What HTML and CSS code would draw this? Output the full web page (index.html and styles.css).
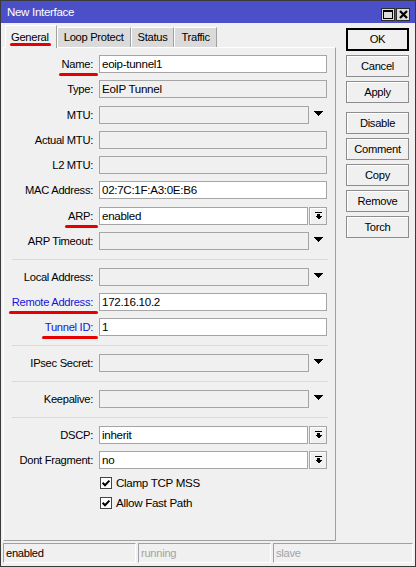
FILE: index.html
```html
<!DOCTYPE html>
<html>
<head>
<meta charset="utf-8">
<title>New Interface</title>
<link rel="stylesheet" href="styles.css">
</head>
<body>
<div class="window">
  <div class="titlebar">
    <span class="title">New Interface</span>
    <div class="tb-buttons">
      <span class="tb-btn"><svg width="10" height="9" viewBox="0 0 10 9" shape-rendering="crispEdges"><rect x="0.5" y="0.5" width="9" height="8" fill="none" stroke="#000"/><rect x="0" y="0" width="10" height="2" fill="#000"/></svg></span>
      <span class="tb-btn"><svg width="9" height="9" viewBox="0 0 9 9"><path d="M1 1 L8 8 M8 1 L1 8" stroke="#000" stroke-width="2.2"/></svg></span>
    </div>
  </div>
  <div class="body">
    <div class="main">
      <div class="left">
        <div class="tabs">
          <div class="tab active"><span class="tab-text">General</span></div>
          <div class="tab">Loop Protect</div>
          <div class="tab">Status</div>
          <div class="tab">Traffic</div>
        </div>
        <div class="panel">
          <div class="group first">
            <div class="row"><div class="lbl"><span class="marked">Name:</span></div><div class="field"><div class="input edit">eoip-tunnel1</div></div></div>
            <div class="row"><div class="lbl">Type:</div><div class="field"><div class="input">EoIP Tunnel</div></div></div>
            <div class="row"><div class="lbl">MTU:</div><div class="field"><div class="input"></div><div class="drop-arrow"><svg width="9" height="5" viewBox="0 0 9 5" shape-rendering="crispEdges"><polygon points="0,0 9,0 4.5,5" fill="#000"/></svg></div></div></div>
            <div class="row"><div class="lbl">Actual MTU:</div><div class="field"><div class="input"></div></div></div>
            <div class="row"><div class="lbl">L2 MTU:</div><div class="field"><div class="input"></div></div></div>
            <div class="row"><div class="lbl">MAC Address:</div><div class="field"><div class="input edit">02:7C:1F:A3:0E:B6</div></div></div>
            <div class="row"><div class="lbl"><span class="marked">ARP:</span></div><div class="field"><div class="input edit">enabled</div><div class="drop-btn"><svg width="7" height="8" viewBox="0 0 7 8" shape-rendering="crispEdges"><rect x="0" y="0" width="7" height="1" fill="#000"/><rect x="2" y="2" width="3" height="2" fill="#000"/><polygon points="0,4 7,4 3.5,7.5" fill="#000"/></svg></div></div></div>
            <div class="row"><div class="lbl">ARP Timeout:</div><div class="field"><div class="input"></div><div class="drop-arrow"><svg width="9" height="5" viewBox="0 0 9 5" shape-rendering="crispEdges"><polygon points="0,0 9,0 4.5,5" fill="#000"/></svg></div></div></div>
          </div>
          <div class="sep"></div>
          <div class="group">
            <div class="row"><div class="lbl">Local Address:</div><div class="field"><div class="input"></div><div class="drop-arrow"><svg width="9" height="5" viewBox="0 0 9 5" shape-rendering="crispEdges"><polygon points="0,0 9,0 4.5,5" fill="#000"/></svg></div></div></div>
            <div class="row"><div class="lbl blue"><span class="marked">Remote Address:</span></div><div class="field"><div class="input edit">172.16.10.2</div></div></div>
            <div class="row"><div class="lbl blue"><span class="marked">Tunnel ID:</span></div><div class="field"><div class="input edit">1</div></div></div>
          </div>
          <div class="sep"></div>
          <div class="group">
            <div class="row"><div class="lbl">IPsec Secret:</div><div class="field"><div class="input"></div><div class="drop-arrow"><svg width="9" height="5" viewBox="0 0 9 5" shape-rendering="crispEdges"><polygon points="0,0 9,0 4.5,5" fill="#000"/></svg></div></div></div>
          </div>
          <div class="sep"></div>
          <div class="group">
            <div class="row"><div class="lbl">Keepalive:</div><div class="field"><div class="input"></div><div class="drop-arrow"><svg width="9" height="5" viewBox="0 0 9 5" shape-rendering="crispEdges"><polygon points="0,0 9,0 4.5,5" fill="#000"/></svg></div></div></div>
          </div>
          <div class="sep"></div>
          <div class="group">
            <div class="row"><div class="lbl">DSCP:</div><div class="field"><div class="input edit">inherit</div><div class="drop-btn"><svg width="7" height="8" viewBox="0 0 7 8" shape-rendering="crispEdges"><rect x="0" y="0" width="7" height="1" fill="#000"/><rect x="2" y="2" width="3" height="2" fill="#000"/><polygon points="0,4 7,4 3.5,7.5" fill="#000"/></svg></div></div></div>
            <div class="row"><div class="lbl">Dont Fragment:</div><div class="field"><div class="input edit">no</div><div class="drop-btn"><svg width="7" height="8" viewBox="0 0 7 8" shape-rendering="crispEdges"><rect x="0" y="0" width="7" height="1" fill="#000"/><rect x="2" y="2" width="3" height="2" fill="#000"/><polygon points="0,4 7,4 3.5,7.5" fill="#000"/></svg></div></div></div>
            <div class="row check-row"><div></div><div class="check"><svg width="12" height="12" viewBox="0 0 12 12"><rect x="0.5" y="0.5" width="11" height="11" fill="#fff" stroke="#444"/><path d="M2.6 5.8 L5 8.2 L9.4 3.6" fill="none" stroke="#000" stroke-width="2"/></svg><span>Clamp TCP MSS</span></div></div>
            <div class="row check-row"><div></div><div class="check"><svg width="12" height="12" viewBox="0 0 12 12"><rect x="0.5" y="0.5" width="11" height="11" fill="#fff" stroke="#444"/><path d="M2.6 5.8 L5 8.2 L9.4 3.6" fill="none" stroke="#000" stroke-width="2"/></svg><span>Allow Fast Path</span></div></div>
          </div>
        </div>
      </div>
      <div class="buttons">
        <div class="btn default">OK</div>
        <div class="btn">Cancel</div>
        <div class="btn">Apply</div>
        <div class="btn spaced">Disable</div>
        <div class="btn">Comment</div>
        <div class="btn">Copy</div>
        <div class="btn">Remove</div>
        <div class="btn">Torch</div>
      </div>
    </div>
    <div class="statusbar">
      <div class="status">enabled</div>
      <div class="status dim">running</div>
      <div class="status dim">slave</div>
    </div>
  </div>
</div>
</body>
</html>
```

FILE: styles.css
```css
html, body {
  margin: 0;
  padding: 0;
}
body {
  width: 416px;
  height: 567px;
  font-family: "Liberation Sans", Arial, sans-serif;
  font-size: 11.2px;
  letter-spacing: -0.3px;
  color: #000;
  background: #fff;
}
.window {
  box-sizing: border-box;
  width: 416px;
  height: 567px;
  border: 1px solid #3a3a3a;
  background: #f0f0f0;
  display: flex;
  flex-direction: column;
}
.titlebar {
  flex: none;
  height: 22px;
  background: #4b50c8;
  display: flex;
  align-items: center;
  justify-content: space-between;
  padding: 0 5px 0 6px;
}
.title {
  color: #fff;
  font-size: 11.5px;
}
.tb-buttons {
  display: flex;
  gap: 1px;
  margin-top: 4px;
}
.tb-btn {
  box-sizing: border-box;
  width: 14px;
  height: 13px;
  border: 1px solid #2e2e2e;
  background: #dcdcdc;
  display: flex;
  align-items: center;
  justify-content: center;
}
.body {
  flex: 1;
  display: flex;
  flex-direction: column;
  gap: 2px;
  padding: 2px 2px 3px 2px;
  min-height: 0;
}
.main {
  flex: 1;
  display: flex;
  gap: 10px;
  min-height: 0;
}
.left {
  width: 333px;
  display: flex;
  flex-direction: column;
}
.tabs {
  flex: none;
  height: 22px;
  display: flex;
  align-items: flex-end;
  padding-left: 2px;
  position: relative;
  z-index: 1;
}
.tab {
  box-sizing: border-box;
  height: 20px;
  padding: 0 6px;
  line-height: 19px;
  background: #dadada;
  border-top: 1px solid #fff;
  border-left: 1px solid #fff;
  border-right: 1px solid #a0a0a0;
  white-space: nowrap;
}
.tab.active {
  height: 23px;
  margin-bottom: -1px;
  padding: 0 7px 0 5px;
  background: #f0f0f0;
  line-height: 22px;
}
.tab-text {
  position: relative;
  display: inline-block;
}
.tab-text::after {
  content: "";
  position: absolute;
  left: -1px;
  right: -2px;
  bottom: 2px;
  height: 3px;
  border-radius: 2px;
  background: #e80000;
}
.panel {
  flex: 1;
  border: 1px solid;
  border-color: #fff #a0a0a0 #a0a0a0 #fff;
  padding-top: 7px;
  display: flex;
  flex-direction: column;
  gap: 7px;
}
.group {
  display: flex;
  flex-direction: column;
  gap: 7px;
}
.group.first {
  gap: 7.3px;
}
.row {
  display: grid;
  grid-template-columns: 89px 228px;
  column-gap: 6px;
  height: 18px;
  align-items: center;
}
.lbl {
  text-align: right;
  white-space: nowrap;
  line-height: 18px;
}
.lbl.blue {
  color: #1414dc;
}
.marked {
  position: relative;
  display: inline-block;
}
.marked::after {
  content: "";
  position: absolute;
  left: -3px;
  right: -5px;
  bottom: -3px;
  height: 3px;
  border-radius: 2px;
  background: #e80000;
}
.field {
  display: flex;
  height: 18px;
}
.input {
  flex: 1;
  box-sizing: border-box;
  border: 1px solid #a5a5a5;
  background: #f0f0f0;
  padding: 0 2px;
  line-height: 16px;
  font-size: 11.6px;
  white-space: nowrap;
  overflow: hidden;
}
.input.edit {
  background: #fff;
}
.drop-arrow {
  width: 18px;
  display: flex;
  align-items: center;
  justify-content: center;
  padding-bottom: 3px;
  box-sizing: border-box;
}
.drop-btn {
  box-sizing: border-box;
  width: 18px;
  margin-left: 1px;
  border: 1px solid #a5a5a5;
  box-shadow: inset 1px 1px #fff;
  background: #f0f0f0;
  display: flex;
  align-items: center;
  justify-content: center;
}
.sep {
  height: 1px;
  margin: 2px 7px 1px 8px;
  background: #dadada;
}
.row.check-row {
  height: 13px;
}
.check {
  display: flex;
  align-items: center;
  gap: 4px;
  padding-left: 1px;
  white-space: nowrap;
  font-size: 11.6px;
}
.check svg {
  flex: none;
}
.buttons {
  width: 63px;
  display: flex;
  flex-direction: column;
  gap: 4px;
  padding-top: 3px;
}
.btn {
  box-sizing: border-box;
  height: 22px;
  border: 1px solid #8c8c8c;
  box-shadow: inset 1px 1px #fff;
  background: #f0f0f0;
  text-align: center;
  line-height: 20px;
}
.btn.default {
  height: 23px;
  border: 2px solid #000;
  box-shadow: none;
  line-height: 19px;
}
.btn.spaced {
  margin-top: 5px;
}
.statusbar {
  flex: none;
  height: 20px;
  display: grid;
  grid-template-columns: 133px 133px 1fr;
  column-gap: 2px;
}
.status {
  box-sizing: border-box;
  border: 1px solid;
  border-color: #a0a0a0 #fff #fff #a0a0a0;
  padding-left: 2px;
  line-height: 18px;
  white-space: nowrap;
}
.status.dim {
  color: #a4a4a4;
}
```
